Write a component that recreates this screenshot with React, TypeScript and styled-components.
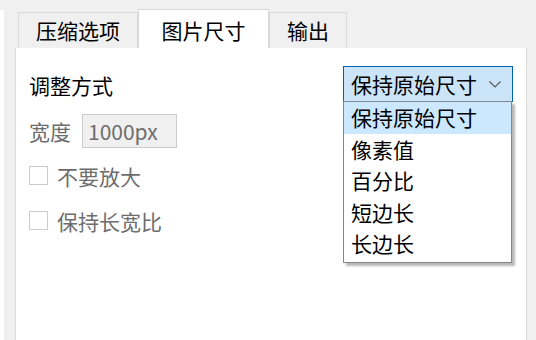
import styled, { createGlobalStyle } from 'styled-components';

const GlobalStyle = createGlobalStyle`
  html, body {
    margin: 0;
    padding: 0;
    background: #f0f0f0;
  }
  body {
    font-family: "Noto Sans CJK SC", "Noto Sans", sans-serif;
    font-size: 21px;
    color: #000;
  }
`;

const Frame = styled.div`
  width: 536px;
  height: 340px;
  display: flex;
  overflow: hidden;
  background: #f0f0f0;
`;

const Edge = styled.div`
  width: 4px;
  margin-top: 10px;
  background: #ffffff;
`;

const Main = styled.div`
  flex: 1;
  display: flex;
  flex-direction: column;
  padding: 0 9px 0 11px;
`;

const TabBar = styled.div`
  height: 48px;
  display: flex;
  align-items: flex-end;
  padding-left: 3px;
`;

const Tab = styled.div<{ $active?: boolean }>`
  box-sizing: border-box;
  height: ${p => (p.$active ? 39 : 36)}px;
  padding: ${p => (p.$active ? '3px 22.5px 0' : '0 17px')};
  display: flex;
  align-items: center;
  background: ${p => (p.$active ? '#ffffff' : '#f0f0f0')};
  border: 1px solid #d9d9d9;
  border-bottom: none;
  line-height: 1;
  white-space: nowrap;
`;

const Panel = styled.div`
  flex: 1;
  background: #ffffff;
  border-left: 1px solid #d9d9d9;
  border-right: 1px solid #d9d9d9;
  padding: 18px 13px 0 13px;
  display: flex;
  flex-direction: column;
`;

const ModeRow = styled.div`
  height: 36px;
  display: flex;
  align-items: center;
  justify-content: space-between;
`;

const Label = styled.span<{ $muted?: boolean; $drop?: number }>`
  color: ${p => (p.$muted ? '#6d6d6d' : '#000')};
  line-height: 1;
  padding-top: ${p => p.$drop ?? 0}px;
  white-space: nowrap;
`;

const SelectWrap = styled.div`
  position: relative;
  width: 170px;
`;

const SelectBox = styled.div`
  box-sizing: border-box;
  height: 36px;
  display: flex;
  align-items: center;
  justify-content: space-between;
  padding: 0 11px 0 7px;
  background: #cce4f7;
  border: 1px solid #0063b1;
  line-height: 1;
  white-space: nowrap;
`;

const DropList = styled.ul`
  position: absolute;
  top: 35px;
  left: 0;
  box-sizing: border-box;
  width: 169px;
  margin: 0;
  padding: 0 0 2px;
  list-style: none;
  background: #ffffff;
  border: 1px solid #828790;
  box-shadow: 3px 3px 2px rgba(0, 0, 0, 0.28);
  z-index: 5;
`;

const DropItem = styled.li<{ $selected?: boolean }>`
  height: 31.5px;
  line-height: 31.5px;
  padding-left: 7px;
  background: ${p => (p.$selected ? '#cce8ff' : 'transparent')};
  white-space: nowrap;
`;

const WidthRow = styled.div`
  margin-top: 12px;
  height: 34px;
  display: flex;
  align-items: center;
  gap: 11px;
`;

const TextInput = styled.div`
  box-sizing: border-box;
  width: 95px;
  height: 34px;
  display: flex;
  align-items: center;
  padding-left: 5px;
  background: #f0f0f0;
  border: 1px solid #cccccc;
  color: #6d6d6d;
  line-height: 1;
`;

const Options = styled.div`
  margin-top: 13px;
  display: flex;
  flex-direction: column;
  gap: 15px;
`;

const CheckRow = styled.label`
  height: 30px;
  display: flex;
  align-items: center;
  gap: 9px;
`;

const CheckBox = styled.span`
  box-sizing: border-box;
  width: 19px;
  height: 19px;
  border: 1px solid #cccccc;
  background: #ffffff;
  margin-top: -2px;
`;

const Chevron = () => (
  <svg width="12" height="7" viewBox="0 0 12 7">
    <polyline points="0.5,0.5 6,6 11.5,0.5" fill="none" stroke="#555" strokeWidth="1.1" />
  </svg>
);

const tabs = ['压缩选项', '图片尺寸', '输出'];
const modes = ['保持原始尺寸', '像素值', '百分比', '短边长', '长边长'];

const App = () => {
  return (
    <>
      <GlobalStyle />
      <Frame>
        <Edge />
        <Main>
          <TabBar>
            {tabs.map((t, i) => (
              <Tab key={t} $active={i === 1}>{t}</Tab>
            ))}
          </TabBar>
          <Panel>
            <ModeRow>
              <Label $drop={3}>调整方式</Label>
              <SelectWrap>
                <SelectBox>
                  <span>保持原始尺寸</span>
                  <Chevron />
                </SelectBox>
                <DropList>
                  {modes.map((m, i) => (
                    <DropItem key={m} $selected={i === 0}>{m}</DropItem>
                  ))}
                </DropList>
              </SelectWrap>
            </ModeRow>
            <WidthRow>
              <Label $muted>宽度</Label>
              <TextInput>1000px</TextInput>
            </WidthRow>
            <Options>
              <CheckRow>
                <CheckBox />
                <Label $muted>不要放大</Label>
              </CheckRow>
              <CheckRow>
                <CheckBox />
                <Label $muted>保持长宽比</Label>
              </CheckRow>
            </Options>
          </Panel>
        </Main>
      </Frame>
    </>
  );
};

export default App;
